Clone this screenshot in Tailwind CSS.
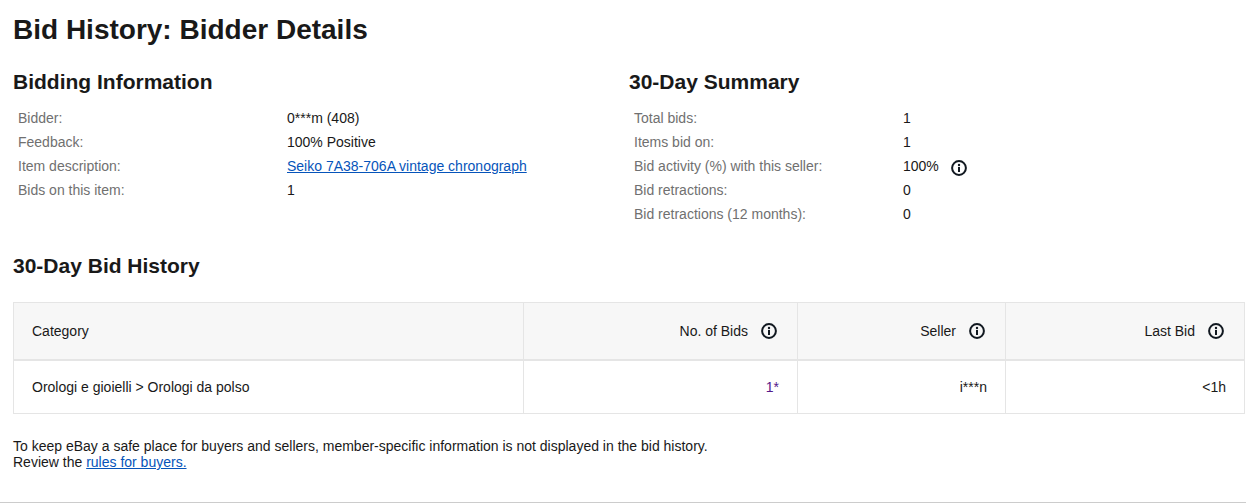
<!DOCTYPE html>
<html lang="en">
<head>
    <meta charset="UTF-8">
    <title>Bid History: Bidder Details</title>
    <script src="https://cdn.jsdelivr.net/npm/@tailwindcss/browser@4"></script>
</head>
<body class="bg-white text-[#191919] text-[14px] leading-[18px] font-['Liberation_Sans',Arial,sans-serif] h-[504px] overflow-hidden">
    <svg class="hidden">
        <symbol id="info" viewBox="0 0 16 16">
            <circle cx="8" cy="8" r="6.9" fill="none" stroke="#111820" stroke-width="2"></circle>
            <rect x="7" y="7" width="2" height="5" fill="#111820"></rect>
            <circle cx="8" cy="5" r="1.2" fill="#111820"></circle>
        </symbol>
    </svg>

    <div class="h-[503px] border-b border-[#ccc] pl-[13px] pr-px">
        <h1 class="pt-[14px] text-[28px] leading-[32px] font-bold">Bid History: Bidder Details</h1>

        <div class="flex mt-[24px]">
            <section class="w-[616px]">
                <h2 class="text-[21px] leading-[24px] font-bold">Bidding Information</h2>
                <dl class="mt-[12px] pl-[5px] grid grid-cols-[269px_1fr] auto-rows-[24px] items-center">
                    <dt class="text-[#707070]">Bidder:</dt>
                    <dd>0***m (408)</dd>
                    <dt class="text-[#707070]">Feedback:</dt>
                    <dd>100% Positive</dd>
                    <dt class="text-[#707070]">Item description:</dt>
                    <dd><a href="#" class="text-[#0654ba] underline">Seiko 7A38-706A vintage chronograph</a></dd>
                    <dt class="text-[#707070]">Bids on this item:</dt>
                    <dd>1</dd>
                </dl>
            </section>
            <section>
                <h2 class="text-[21px] leading-[24px] font-bold">30-Day Summary</h2>
                <dl class="mt-[12px] pl-[5px] grid grid-cols-[269px_1fr] auto-rows-[24px] items-center">
                    <dt class="text-[#707070]">Total bids:</dt>
                    <dd>1</dd>
                    <dt class="text-[#707070]">Items bid on:</dt>
                    <dd>1</dd>
                    <dt class="text-[#707070]">Bid activity (%) with this seller:</dt>
                    <dd class="flex items-center">100%<svg class="w-4 h-4 ml-[12px] mt-[4px]"><use href="#info"></use></svg></dd>
                    <dt class="text-[#707070]">Bid retractions:</dt>
                    <dd>0</dd>
                    <dt class="text-[#707070]">Bid retractions (12 months):</dt>
                    <dd>0</dd>
                </dl>
            </section>
        </div>

        <h2 class="mt-[28px] text-[21px] leading-[24px] font-bold">30-Day Bid History</h2>

        <div class="mt-[24px] w-[1232px] border border-[#e5e5e5] grid grid-cols-[509px_274px_208px_1fr]">
            <div class="h-[58px] bg-[#f7f7f7] border-b-2 border-[#e5e5e5] pl-[18px] pb-px flex items-center">Category</div>
            <div class="h-[58px] bg-[#f7f7f7] border-b-2 border-l border-[#e5e5e5] pr-[20px] pb-px flex items-center justify-end">No. of Bids<svg class="w-4 h-4 ml-[13px]"><use href="#info"></use></svg></div>
            <div class="h-[58px] bg-[#f7f7f7] border-b-2 border-l border-[#e5e5e5] pr-[20px] pb-px flex items-center justify-end">Seller<svg class="w-4 h-4 ml-[13px]"><use href="#info"></use></svg></div>
            <div class="h-[58px] bg-[#f7f7f7] border-b-2 border-l border-[#e5e5e5] pr-[20px] pb-px flex items-center justify-end">Last Bid<svg class="w-4 h-4 ml-[13px]"><use href="#info"></use></svg></div>
            <div class="h-[52px] pl-[18px] flex items-center">Orologi e gioielli &gt; Orologi da polso</div>
            <div class="h-[52px] border-l border-[#e5e5e5] pr-[18px] flex items-center justify-end"><a href="#" class="text-[#551a8b]">1*</a></div>
            <div class="h-[52px] border-l border-[#e5e5e5] pr-[18px] flex items-center justify-end">i***n</div>
            <div class="h-[52px] border-l border-[#e5e5e5] pr-[18px] flex items-center justify-end">&lt;1h</div>
        </div>

        <p class="mt-[24px] leading-[16px]">To keep eBay a safe place for buyers and sellers, member-specific information is not displayed in the bid history.<br>Review the <a href="#" class="text-[#0654ba] underline">rules for buyers.</a></p>
    </div>
</body>
</html>
